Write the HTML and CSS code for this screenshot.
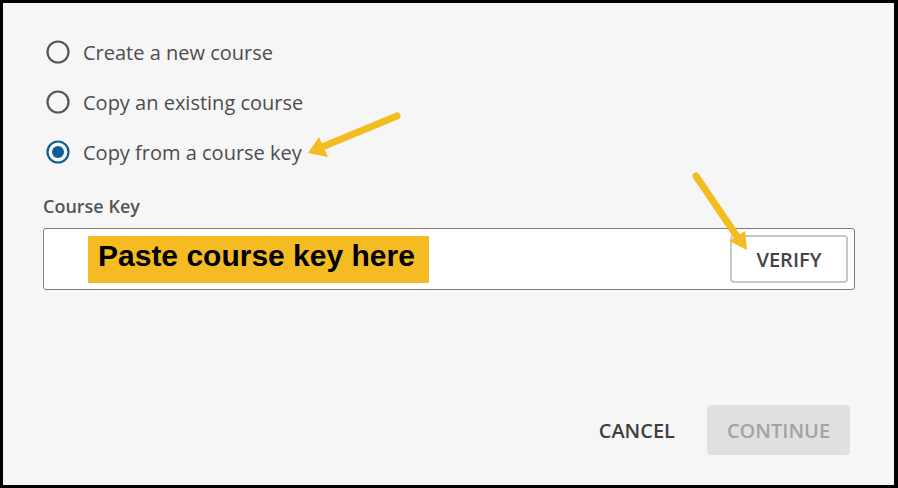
FILE: index.html
```html
<!DOCTYPE html>
<html>
<head>
<meta charset="utf-8">
<link rel="stylesheet" href="styles.css">
</head>
<body>
<div class="frame">
  <div class="options">
    <label class="option">
      <svg class="radio" width="24" height="24" viewBox="0 0 24 24"><circle cx="12" cy="12" r="10.5" fill="none" stroke="#555" stroke-width="2.2"/></svg>
      <span>Create a new course</span>
    </label>
    <label class="option">
      <svg class="radio" width="24" height="24" viewBox="0 0 24 24"><circle cx="12" cy="12" r="10.5" fill="none" stroke="#555" stroke-width="2.2"/></svg>
      <span>Copy an existing course</span>
    </label>
    <label class="option">
      <svg class="radio" width="24" height="24" viewBox="0 0 24 24"><circle cx="12" cy="12" r="10.5" fill="none" stroke="#0b5f96" stroke-width="2.2"/><circle cx="12" cy="12" r="6" fill="#0b5f96"/></svg>
      <span>Copy from a course key</span>
    </label>
  </div>
  <div class="field-label">Course Key</div>
  <div class="input">
    <div class="paste">Paste course key here</div>
    <button class="verify">VERIFY</button>
  </div>
  <div class="actions">
    <button class="cancel">CANCEL</button>
    <button class="continue">CONTINUE</button>
  </div>
  <svg class="arrows" width="898" height="488" viewBox="0 0 898 488">
    <g stroke="#f4bc22" stroke-width="7" stroke-linecap="round" fill="none">
      <line x1="397" y1="116" x2="322" y2="147"/>
      <line x1="696" y1="176" x2="738" y2="238"/>
    </g>
    <polygon points="308,153 319,137 328,157" fill="#f4bc22"/>
    <polygon points="747,250 729,241 745,231" fill="#f4bc22"/>
  </svg>
</div>
</body>
</html>
```
FILE: styles.css
```css
html, body {
  margin: 0;
  padding: 0;
}
body {
  width: 898px;
  height: 488px;
  font-family: "Open Sans", "Liberation Sans", sans-serif;
  color: #4a4a4a;
}
.frame {
  position: relative;
  box-sizing: border-box;
  width: 898px;
  height: 488px;
  border: solid #000;
  border-width: 3px 4px 3px 3px;
  background: #f6f6f6;
  padding: 37px 39px 0 40px;
  display: flex;
  flex-direction: column;
}
.options {
  display: flex;
  flex-direction: column;
  gap: 26px;
}
.option {
  display: flex;
  align-items: center;
  height: 24px;
  font-size: 20px;
  color: #4d4d4d;
}
.radio {
  margin-left: 3px;
  margin-right: 13px;
  flex: none;
}
.field-label {
  margin-top: 31px;
  font-size: 18px;
  font-weight: 600;
  line-height: 22px;
  color: #555;
}
.input {
  margin-top: 11px;
  height: 62px;
  box-sizing: border-box;
  border: 1px solid #7d7d7d;
  border-radius: 3px;
  background: #fff;
  display: flex;
  align-items: center;
  justify-content: space-between;
  padding: 0 6px 0 44px;
}
.paste {
  background: #f4bc22;
  height: 47px;
  width: 341px;
  box-sizing: border-box;
  padding: 0 0 6px 10px;
  display: flex;
  align-items: center;
  font-family: "Liberation Sans", Arial, sans-serif;
  font-weight: bold;
  font-size: 30px;
  color: #000;
}
.verify {
  width: 118px;
  height: 48px;
  box-sizing: border-box;
  border: 2px solid #c8c8c8;
  border-radius: 4px;
  background: #fff;
  font-family: "Open Sans", sans-serif;
  font-size: 20px;
  font-weight: 600;
  color: #444;
  padding: 0;
}
.actions {
  margin-top: auto;
  margin-bottom: 30px;
  display: flex;
  justify-content: flex-end;
  align-items: center;
  gap: 16px;
  padding-right: 5px;
}
.cancel {
  background: none;
  border: none;
  font-family: "Open Sans", sans-serif;
  font-size: 20px;
  font-weight: 600;
  color: #3f3f3f;
  padding: 0 16px;
  height: 50px;
}
.continue {
  width: 143px;
  height: 50px;
  border: none;
  border-radius: 4px;
  background: #e0e0e0;
  font-family: "Open Sans", sans-serif;
  font-size: 20px;
  font-weight: 600;
  color: #a3a3a3;
  padding: 0;
}
.arrows {
  position: absolute;
  left: -3px;
  top: -3px;
  pointer-events: none;
}
```
